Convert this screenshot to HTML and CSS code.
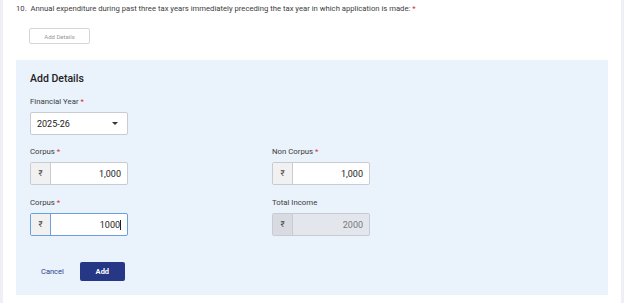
FILE: index.html
```html
<!DOCTYPE html>
<html lang="en">
  <head>
    <meta charset="UTF-8" />
    <meta name="viewport" content="width=device-width, initial-scale=1.0" />
    <title>Annual expenditure</title>
    <link rel="stylesheet" href="styles.css">
  </head>
  <body>
    <div class="page">
      <div class="content">
        <p class="question">10.&nbsp; Annual expenditure during past three tax years immediately preceding the tax year in which application is made: <span class="req">*</span></p>
        <button class="outline-btn">Add Details</button>

        <div class="panel">
          <h2>Add Details</h2>

          <div class="field">
            <label>Financial Year <span class="req">*</span></label>
            <div class="select">
              <span>2025-26</span>
              <span class="caret"></span>
            </div>
          </div>

          <div class="row">
            <div class="field">
              <label>Corpus <span class="req">*</span></label>
              <div class="amount">
                <span class="prefix">₹</span>
                <span class="value">1,000</span>
              </div>
            </div>
            <div class="field">
              <label>Non Corpus <span class="req">*</span></label>
              <div class="amount">
                <span class="prefix">₹</span>
                <span class="value">1,000</span>
              </div>
            </div>
          </div>

          <div class="row">
            <div class="field">
              <label>Corpus <span class="req">*</span></label>
              <div class="amount focused">
                <span class="prefix">₹</span>
                <span class="value">1000<span class="cursor"></span></span>
              </div>
            </div>
            <div class="field">
              <label>Total Income</label>
              <div class="amount disabled">
                <span class="prefix">₹</span>
                <span class="value">2000</span>
              </div>
            </div>
          </div>

          <div class="actions">
            <button class="link-btn">Cancel</button>
            <button class="primary-btn">Add</button>
          </div>
        </div>
      </div>
    </div>
  </body>
</html>
```

FILE: styles.css
```css
* {
  box-sizing: border-box;
}
body {
  margin: 0;
  font-family: Roboto, "Liberation Sans", sans-serif;
  color: #333;
  background: #fff;
}
.page {
  display: flex;
  height: 303px;
  border-left: 3px solid #eef0f6;
  border-right: 3px solid #eef0f6;
}
.content {
  flex: 1;
  padding: 0 13px 0 13px;
}
.question {
  margin: 0;
  padding-top: 4px;
  font-size: 7.7px;
  line-height: 9px;
  color: #3c3c3c;
}
.req {
  color: #d32f2f;
}
.outline-btn {
  display: block;
  margin: 15px 0 0 13px;
  width: 61px;
  height: 16px;
  padding: 0;
  border: 1px solid #d6d6d6;
  border-radius: 2px;
  background: #fff;
  font-family: inherit;
  font-size: 6px;
  color: #999;
}
.panel {
  margin-top: 16px;
  width: 592px;
  height: 235px;
  background: #eaf2fc;
  padding: 12px 14px 0 14px;
}
h2 {
  margin: 0;
  font-size: 10.5px;
  line-height: 13px;
  font-weight: 500;
  color: #222;
}
.field {
  width: 98px;
}
.panel > .field {
  margin-top: 12px;
}
label {
  display: block;
  font-size: 7.8px;
  line-height: 9px;
  color: #3c3c3c;
  margin-bottom: 6px;
}
.select {
  display: flex;
  align-items: center;
  justify-content: space-between;
  height: 23px;
  padding: 0 9px 0 6px;
  background: #fff;
  border: 1px solid #c8ccd2;
  border-radius: 2px;
  font-size: 9px;
  color: #222;
}
.caret {
  width: 0;
  height: 0;
  border-left: 3px solid transparent;
  border-right: 3px solid transparent;
  border-top: 3px solid #333;
}
.row {
  display: flex;
  gap: 144px;
  margin-top: 12px;
}
.row + .row {
  margin-top: 13px;
}
.amount {
  display: flex;
  height: 23px;
  background: #fff;
  border: 1px solid #c8ccd2;
  border-radius: 2px;
  overflow: hidden;
  font-size: 9px;
  color: #222;
}
.prefix {
  display: flex;
  align-items: center;
  justify-content: center;
  width: 20px;
  background: #f1f1f1;
  border-right: 1px solid #c8ccd2;
  font-size: 8px;
  color: #444;
}
.value {
  flex: 1;
  display: flex;
  align-items: center;
  justify-content: flex-end;
  padding-right: 6px;
}
.cursor {
  display: inline-block;
  width: 1px;
  height: 10px;
  background: #222;
}
.focused {
  border-color: #6aa0dc;
}
.focused .prefix {
  border-right-color: #6aa0dc;
}
.disabled {
  background: #e3e7ed;
}
.disabled .prefix {
  background: #d8dce2;
}
.disabled .value {
  color: #777;
}
.actions {
  display: flex;
  align-items: center;
  gap: 16px;
  margin-top: 26px;
  padding-left: 11px;
}
.link-btn {
  padding: 0;
  border: none;
  background: none;
  font-family: inherit;
  font-size: 7.5px;
  color: #2b3f8c;
}
.primary-btn {
  width: 45px;
  height: 19px;
  padding: 0;
  border: none;
  border-radius: 2px;
  background: #253785;
  font-family: inherit;
  font-size: 7.5px;
  font-weight: 700;
  color: #fff;
}
```
